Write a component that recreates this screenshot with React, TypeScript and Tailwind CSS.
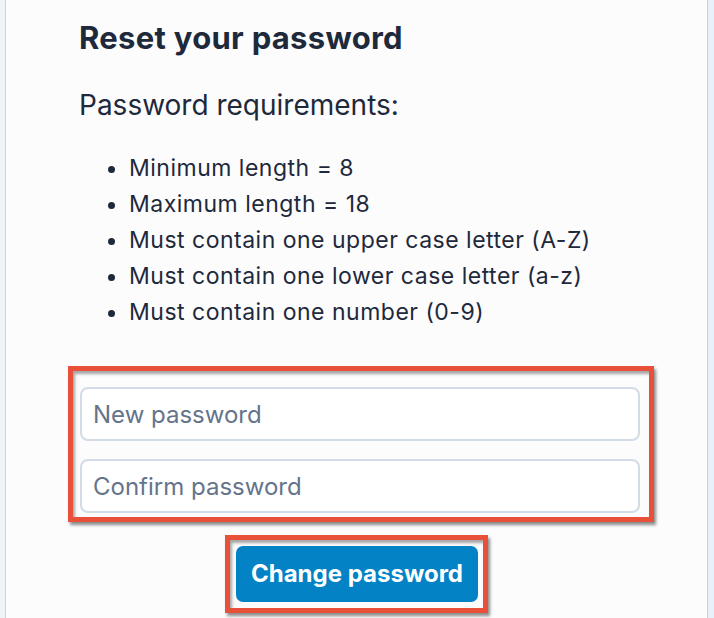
import React from "react";

export default function App() {
  const reqs = [
    "Minimum length = 8",
    "Maximum length = 18",
    "Must contain one upper case letter (A-Z)",
    "Must contain one lower case letter (a-z)",
    "Must contain one number (0-9)",
  ];
  return (
    <div
      className="flex h-[618px] w-[714px] overflow-hidden bg-[#eef1f7]"
      style={{ fontFamily: "Inter, 'Noto Sans', sans-serif" }}
    >
      <div className="w-[5px] shrink-0 bg-[#eff2f7]" />
      <div className="w-[1px] shrink-0 bg-[#c9d3e2]" />
      <div className="flex w-[701px] shrink-0 flex-col bg-[#fcfcfd] pl-[73px] text-[#1e293b]">
        <h1 className="mt-[20px] text-[31px] font-bold leading-[36px] tracking-[0.3px]">
          Reset your password
        </h1>
        <p className="mt-[31px] text-[28px] leading-[36px]">Password requirements:</p>
        <ul className="mt-[27px] list-disc pl-[50px] text-[23px] leading-[36px] tracking-[0.5px]">
          {reqs.map((r) => (
            <li key={r}>{r}</li>
          ))}
        </ul>
        <div className="ml-[-11px] mt-[36px] flex w-[586px] flex-col gap-[18px] border-[5px] border-[#e8503a] pb-[4px] pl-[7px] pr-[9px] pt-[16px] shadow-[2px_3px_3px_rgba(0,0,0,0.45),inset_2px_3px_3px_rgba(0,0,0,0.35)]">
          <input
            type="password"
            placeholder="New password"
            className="h-[54px] w-full rounded-[8px] border-[2px] border-[#d3dbe6] bg-white px-[11px] text-[24px] text-[#1e293b] outline-none placeholder:text-[#64748b]"
          />
          <input
            type="password"
            placeholder="Confirm password"
            className="h-[54px] w-full rounded-[8px] border-[2px] border-[#d3dbe6] bg-white px-[11px] text-[24px] text-[#1e293b] outline-none placeholder:text-[#64748b]"
          />
        </div>
        <div className="ml-[146px] mt-[13px] w-[263px] border-[5px] border-[#e8503a] p-[6px] shadow-[2px_3px_3px_rgba(0,0,0,0.45),inset_2px_3px_3px_rgba(0,0,0,0.35)]">
          <button className="flex h-[56px] w-[242px] items-center justify-center rounded-[7px] bg-[#0383c6] text-[24px] font-bold text-white">
            Change password
          </button>
        </div>
      </div>
      <div className="w-[1px] shrink-0 bg-[#c6d1e0]" />
      <div className="flex-1 bg-[#e9f0f9]" />
    </div>
  );
}
